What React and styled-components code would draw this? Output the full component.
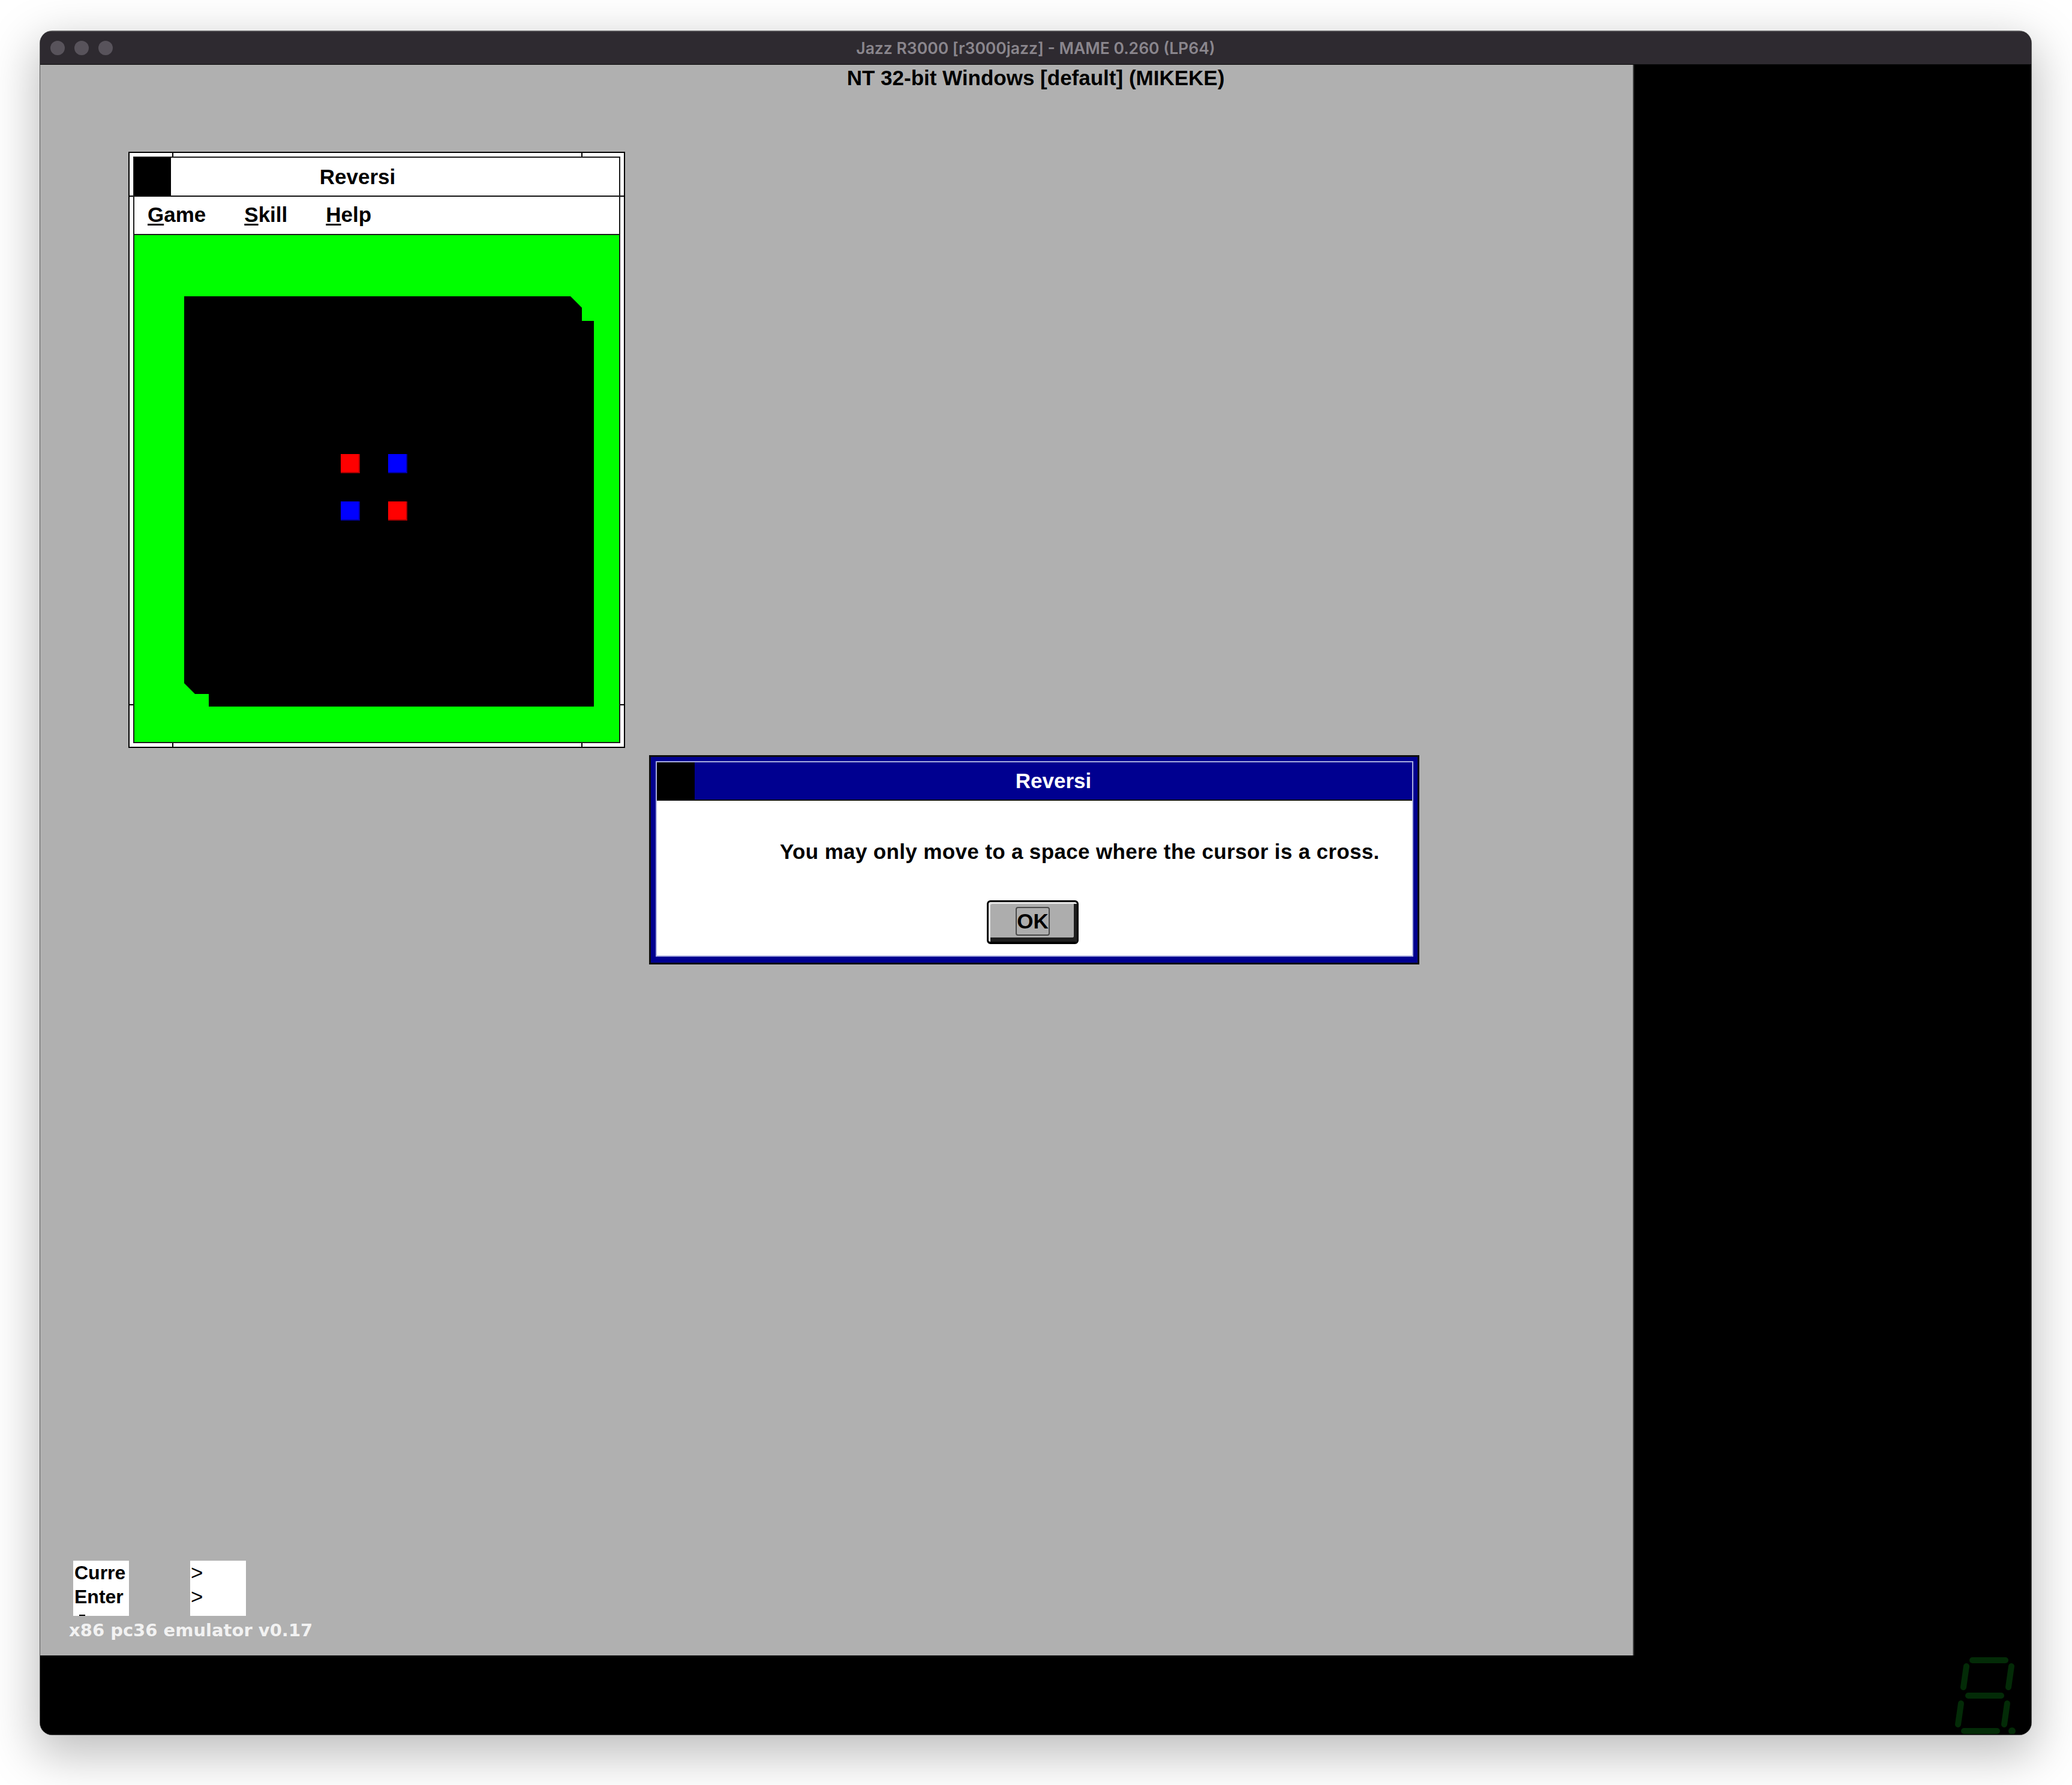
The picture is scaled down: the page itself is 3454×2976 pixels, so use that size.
import React from "react";
import styled, { createGlobalStyle } from "styled-components";

const Global = createGlobalStyle`
  html, body { margin: 0; padding: 0; background: #ffffff; }
  body { width: 3454px; height: 2976px; overflow: hidden; }
  * { box-sizing: border-box; }
`;

const SYS = `"Liberation Sans", Arial, sans-serif`;

const Page = styled.div`
  width: 3454px;
  height: 2976px;
  padding: 52px 0 0 67px;
  background: #ffffff;
`;

const MacWindow = styled.div`
  width: 3319px;
  height: 2840px;
  border-radius: 20px;
  overflow: hidden;
  background: #000;
  display: flex;
  flex-direction: column;
  box-shadow: 0 0 0 1px rgba(0, 0, 0, 0.6), 0 26px 80px 8px rgba(0, 0, 0, 0.26);
`;

const MacTitleBar = styled.div`
  height: 56px;
  flex: none;
  display: grid;
  grid-template-columns: 1fr auto 1fr;
  align-items: center;
  background: #2e2a30;
  border-bottom: 1px solid #0a0a0a;
  box-shadow: inset 0 1px 0 rgba(255, 255, 255, 0.16);
  padding: 0 17px;
`;

const Lights = styled.div`
  display: flex;
  gap: 16px;
`;

const Light = styled.span`
  width: 24px;
  height: 24px;
  border-radius: 50%;
  background: #58535b;
`;

const MacTitle = styled.div`
  font-family: Inter, "Open Sans", sans-serif;
  font-weight: 600;
  font-size: 26.5px;
  color: #8a868d;
  white-space: nowrap;
`;

const Content = styled.div`
  flex: 1;
  position: relative;
  display: flex;
  flex-direction: column;
  background: #000;
`;

const ScreenRow = styled.div`
  height: 2652px;
  flex: none;
  display: flex;
`;

const GrayScreen = styled.div`
  position: relative;
  width: 2657px;
  height: 100%;
  background: #b0b0b0;
  border-right: 2px solid #3c3c3c;
  display: flex;
  flex-direction: column;
  justify-content: flex-end;
  padding: 0 0 25px 48px;
`;

const BlackFill = styled.div`
  flex: 1;
  background: #000;
`;

const BottomStrip = styled.div`
  flex: 1;
  display: flex;
  justify-content: flex-end;
  align-items: flex-start;
  overflow: hidden;
  background: #000;
  padding-right: 20px;
`;

const OsdText = styled.div`
  position: absolute;
  top: 2px;
  left: 0;
  right: 0;
  text-align: center;
  font-family: ${SYS};
  font-weight: 700;
  font-size: 35px;
  line-height: 40px;
  color: #000;
  white-space: nowrap;
`;

/* ---------- emulator console ---------- */
const ConsoleRow = styled.div`
  display: flex;
  gap: 102px;
  margin-left: 7px;
`;

const ConsoleBox = styled.div`
  position: relative;
  width: 93px;
  height: 92px;
  background: #fff;
  overflow: hidden;
  padding-left: ${(p) => p.$pad}px;
  font-family: ${SYS};
  font-weight: 700;
  font-size: 32px;
  line-height: 40px;
  color: #000;
  white-space: pre;
`;

const ConsoleLine = styled.div`
  height: 40px;
`;

const ConsoleArrow = styled.div`
  height: 40px;
  font-family: ${SYS};
  font-weight: 400;
  font-size: 35px;
  line-height: 40px;
`;

/* top sliver of the clipped third console line */
const ClippedGlyph = styled.span`
  display: block;
  margin: 10px 0 0 8px;
  width: 10px;
  height: 3px;
  background: #000;
`;

const EmuLabel = styled.div`
  margin-top: 7px;
  font-family: "DejaVu Sans", sans-serif;
  font-weight: 700;
  font-size: 29px;
  line-height: 34px;
  color: #f2f2f2;
  white-space: nowrap;
`;

/* ---------- Windows 3.x style main window ---------- */
const ReversiFrame = styled.div`
  position: absolute;
  left: 147px;
  top: 145px;
  width: 828px;
  height: 994px;
  border: 2px solid #000;
  background: #fff;
  padding: 6px;
`;

const FrameTick = styled.span`
  position: absolute;
  background: #000;
  ${(p) =>
    p.$side === "top" || p.$side === "bottom"
      ? `width: 2px; height: 6px; left: ${p.$at}px; ${p.$side}: 0;`
      : `height: 2px; width: 6px; top: ${p.$at}px; ${p.$side}: 0;`}
`;

const FrameInner = styled.div`
  height: 100%;
  border: 2px solid #1c1c1c;
  display: flex;
  flex-direction: column;
`;

const Caption = styled.div`
  height: ${(p) => p.$h}px;
  flex: none;
  display: flex;
  background: ${(p) => (p.$active ? "#000090" : "#ffffff")};
  border-bottom: 2px solid #111;
`;

const SysBox = styled.div`
  width: ${(p) => p.$w}px;
  flex: none;
  background: #000;
`;

const CaptionText = styled.div`
  flex: 1;
  text-align: center;
  padding-right: ${(p) => p.$pr || 0}px;
  font-family: ${SYS};
  font-weight: 700;
  font-size: 35px;
  line-height: ${(p) => p.$h - 2}px;
  color: ${(p) => (p.$active ? "#ffffff" : "#000000")};
  white-space: nowrap;
`;

const MenuBar = styled.div`
  height: 64px;
  flex: none;
  display: flex;
  gap: 64px;
  padding-left: 22px;
  background: #fff;
  border-bottom: 2px solid #1c1c1c;
  font-family: ${SYS};
  font-weight: 700;
  font-size: 35px;
  line-height: 60px;
  color: #000;
`;

const MenuItem = styled.span`
  u {
    text-decoration-thickness: 3px;
    text-underline-offset: 3px;
  }
`;

const GreenArea = styled.div`
  flex: 1;
  background: #00ff00;
  padding: 102px 0 0 83px;
`;

const Board = styled.div`
  width: 683px;
  height: 684px;
  background: #000;
  clip-path: polygon(
    0 0,
    644px 0,
    663px 19px,
    663px 41px,
    683px 41px,
    683px 684px,
    41px 684px,
    41px 663px,
    18px 663px,
    0 645px
  );
  display: grid;
  grid-template-columns: repeat(8, 79px);
  grid-template-rows: repeat(8, 79px);
  padding: 2px 0 0 0;
`;

const Piece = styled.div`
  grid-column: ${(p) => p.$col + 1};
  grid-row: ${(p) => p.$row + 1};
  align-self: center;
  justify-self: center;
  width: 32px;
  height: 32px;
  background: ${(p) => (p.$red ? "#ff0000" : "#0000ff")};
  box-shadow: inset -2px -2px 0 ${(p) => (p.$red ? "#a80000" : "#0000a0")};
`;

/* ---------- message box ---------- */
const Dialog = styled.div`
  position: absolute;
  left: 1015px;
  top: 1151px;
  width: 1284px;
  height: 349px;
  background: #000090;
  border: 3px solid #0e0e0e;
  padding: 7px 7px 10px 8px;
`;

const DialogInner = styled.div`
  height: 100%;
  border: 2px solid #a9aee0;
  display: flex;
  flex-direction: column;
  background: #fff;
`;

const DialogBody = styled.div`
  flex: 1;
  background: #fff;
  display: flex;
  flex-direction: column;
  padding-top: 65px;
`;

const Message = styled.div`
  padding-left: 205px;
  font-family: ${SYS};
  font-weight: 700;
  font-size: 35px;
  line-height: 40px;
  letter-spacing: 0.35px;
  color: #000;
  white-space: nowrap;
`;

const OkButton = styled.div`
  align-self: center;
  margin: 61px 0 0 -6px;
  width: 153px;
  height: 73px;
  background: #adadad;
  border: 3px solid #000;
  border-bottom-width: 4px;
  border-radius: 6px;
  box-shadow: inset 3px 3px 0 #e6e6e6, inset -5px -7px 0 #1e1e1e;
  display: flex;
  align-items: center;
  justify-content: center;
  padding-bottom: 2px;
`;

const FocusRect = styled.div`
  width: 57px;
  height: 48px;
  border: 2px solid #4a4a4a;
  border-radius: 4px;
  display: flex;
  align-items: center;
  justify-content: center;
  font-family: ${SYS};
  font-weight: 700;
  font-size: 35px;
  line-height: 44px;
  color: #000;
`;

/* ---------- seven segment ---------- */
const SevenSeg = () => (
  <svg width="110" height="131" viewBox="0 0 110 131">
    <g stroke="#032b07" strokeWidth="10" strokeLinecap="round" fill="none">
      <line x1="32" y1="8" x2="87" y2="8" />
      <line x1="22" y1="18" x2="17" y2="53" />
      <line x1="97" y1="18" x2="92" y2="53" />
      <line x1="25" y1="67" x2="80" y2="67" />
      <line x1="13" y1="80" x2="8" y2="115" />
      <line x1="90" y1="80" x2="85" y2="115" />
      <line x1="18" y1="126" x2="73" y2="126" />
    </g>
    <circle cx="98" cy="126" r="6" fill="#032b07" />
  </svg>
);

const pieces = [
  { col: 3, row: 3, red: true },
  { col: 4, row: 3, red: false },
  { col: 3, row: 4, red: false },
  { col: 4, row: 4, red: true },
];

const menus = [
  ["G", "ame"],
  ["S", "kill"],
  ["H", "elp"],
];

export default function App() {
  return (
    <>
      <Global />
      <Page>
        <MacWindow>
          <MacTitleBar>
            <Lights>
              <Light />
              <Light />
              <Light />
            </Lights>
            <MacTitle>Jazz R3000 [r3000jazz] - MAME 0.260 (LP64)</MacTitle>
            <span />
          </MacTitleBar>
          <Content>
            <ScreenRow>
              <GrayScreen>
                <ReversiFrame>
                  <FrameTick $side="top" $at={71} />
                  <FrameTick $side="top" $at={753} />
                  <FrameTick $side="bottom" $at={71} />
                  <FrameTick $side="bottom" $at={753} />
                  <FrameTick $side="left" $at={71} />
                  <FrameTick $side="left" $at={919} />
                  <FrameTick $side="right" $at={71} />
                  <FrameTick $side="right" $at={919} />
                  <FrameInner>
                    <Caption $h={65}>
                      <SysBox $w={61} />
                      <CaptionText $h={65} $pr={125}>
                        Reversi
                      </CaptionText>
                    </Caption>
                    <MenuBar>
                      {menus.map(([k, rest]) => (
                        <MenuItem key={k}>
                          <u>{k}</u>
                          {rest}
                        </MenuItem>
                      ))}
                    </MenuBar>
                    <GreenArea>
                      <Board>
                        {pieces.map((p) => (
                          <Piece key={`${p.col}-${p.row}`} $col={p.col} $row={p.row} $red={p.red} />
                        ))}
                      </Board>
                    </GreenArea>
                  </FrameInner>
                </ReversiFrame>

                <Dialog>
                  <DialogInner>
                    <Caption $h={64} $active>
                      <SysBox $w={63} />
                      <CaptionText $h={64} $active>
                        Reversi
                      </CaptionText>
                    </Caption>
                    <DialogBody>
                      <Message>You may only move to a space where the cursor is a cross.</Message>
                      <OkButton>
                        <FocusRect>OK</FocusRect>
                      </OkButton>
                    </DialogBody>
                  </DialogInner>
                </Dialog>

                <ConsoleRow>
                  <ConsoleBox $pad={2}>
                    <ConsoleLine>Curre</ConsoleLine>
                    <ConsoleLine>Enter</ConsoleLine>
                    <ClippedGlyph />
                  </ConsoleBox>
                  <ConsoleBox $pad={1}>
                    <ConsoleArrow>&gt;</ConsoleArrow>
                    <ConsoleArrow>&gt;</ConsoleArrow>
                  </ConsoleBox>
                </ConsoleRow>
                <EmuLabel>x86 pc36 emulator v0.17</EmuLabel>
              </GrayScreen>
              <BlackFill />
            </ScreenRow>
            <BottomStrip>
              <SevenSeg />
            </BottomStrip>
            <OsdText>NT 32-bit Windows [default] (MIKEKE)</OsdText>
          </Content>
        </MacWindow>
      </Page>
    </>
  );
}
